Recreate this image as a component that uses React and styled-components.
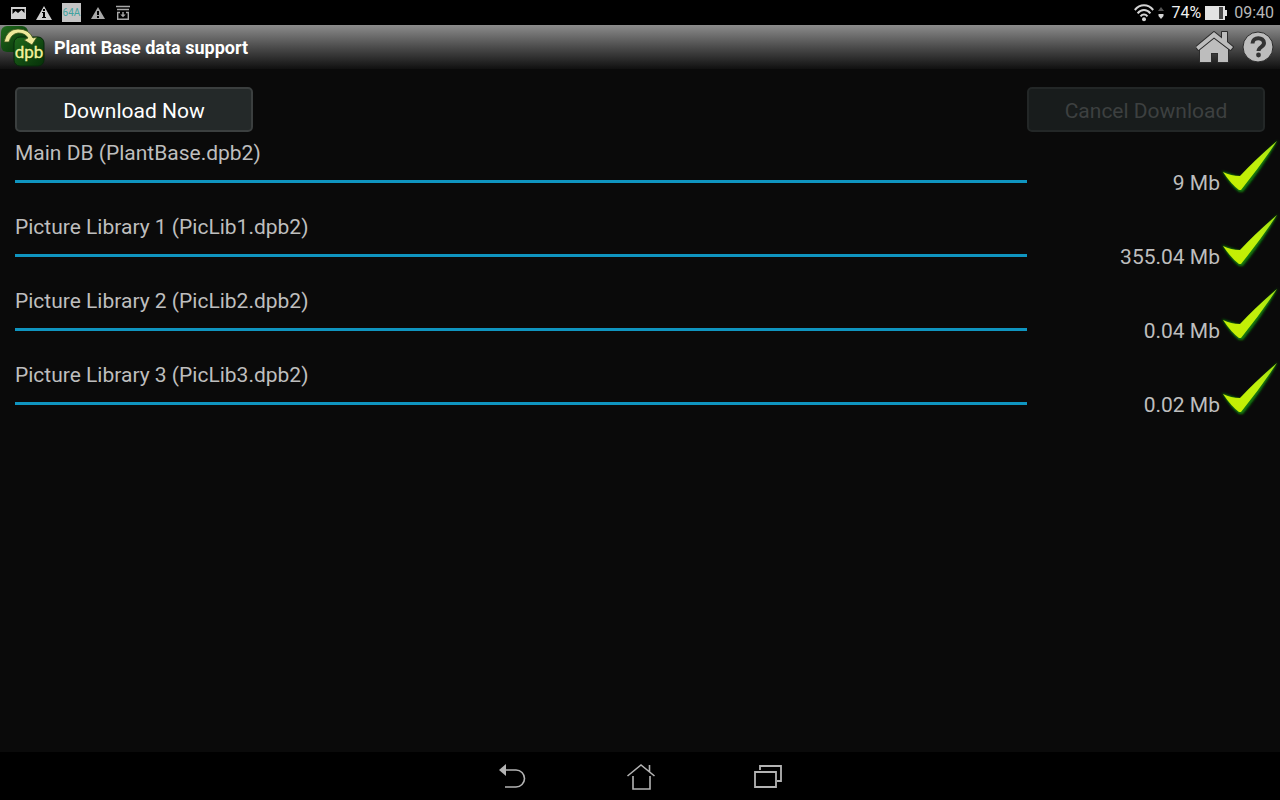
import React from 'react';
import styled, { createGlobalStyle } from 'styled-components';

const files = [
    { id: 'main', label: 'Main DB (PlantBase.dpb2)', size: '9 Mb' },
    { id: 'lib1', label: 'Picture Library 1 (PicLib1.dpb2)', size: '355.04 Mb' },
    { id: 'lib2', label: 'Picture Library 2 (PicLib2.dpb2)', size: '0.04 Mb' },
    { id: 'lib3', label: 'Picture Library 3 (PicLib3.dpb2)', size: '0.02 Mb' },
];

const PictureIcon = () => (
    <svg width="15" height="12" viewBox="0 0 15 12">
        <path fill="#d0d0d0" fillRule="evenodd" d="M0 0h15v12H0zM1.5 2v5l3-3L7 6l3.500-3 3 3V2z" />
    </svg>
);

const InfoTriangle = () => (
    <svg width="16" height="14" viewBox="0 0 16 14">
        <path fill="#d0d0d0" d="M8 0l8 14H0z" />
        <path fill="#000" d="M7 3h2v2H7zM6 6h3v5h1v1H6v-1h1V7H6z" />
    </svg>
);

const WarningTriangle = () => (
    <svg width="14" height="12" viewBox="0 0 14 12">
        <path fill="#a8a8a8" d="M7 0l7 12H0z" />
        <path fill="#000" d="M6 4h2v4H6zM6 9h2v2H6z" />
    </svg>
);

const InstallIcon = () => (
    <svg width="16" height="16" viewBox="0 0 16 16" fill="none" stroke="#a8a8a8" strokeWidth="1.4">
        <path d="M1 1.5h14M2 4.5h12M5 7.5H2.7v6.8h10.6V7.5H11" />
        <path fill="#a8a8a8" stroke="none" d="M7.3 7h1.4v2.5h2L8 12.3 5.3 9.5h2z" />
    </svg>
);

const WifiIcon = () => (
    <svg width="20" height="18" viewBox="0 0 20 18" fill="none" stroke="#d4d4d4" strokeWidth="2">
        <path d="M.8 6C6-.2 14-.2 19.2 6M3.6 9.3c3.6-4.4 9.2-4.4 12.8 0M6.5 12.4c2-2.4 5-2.4 7 0" />
        <circle cx="10" cy="15.3" r="2" fill="#d4d4d4" stroke="none" />
    </svg>
);

const TrafficIcon = () => (
    <svg width="6" height="14" viewBox="0 0 6 14">
        <path fill="#555" d="M3 1l3 4H0z" />
        <path fill="#d4d4d4" d="M.5 8h5v2L3 13 .5 10z" />
    </svg>
);

const BatteryIcon = () => (
    <svg width="22" height="16" viewBox="0 0 22 16">
        <path fill="#e2e2e2" d="M0 1h20v4h2v6h-2v4H0z" />
        <path fill="#4a4a4a" d="M14 2h4v12h-4z" />
    </svg>
);

const LogoIcon = () => (
    <svg width="46" height="44" viewBox="0 0 46 44">
        <defs>
            <linearGradient id="leaf" x1="0" y1="0" x2="1" y2="1">
                <stop offset="0" stopColor="#1f6a1c" />
                <stop offset="1" stopColor="#063008" />
            </linearGradient>
        </defs>
        <rect x="1" y="1" width="27" height="26" rx="6" fill="url(#leaf)" />
        <rect x="14" y="12" width="30" height="29" rx="6" fill="url(#leaf)" stroke="#07280a" />
        <path d="M4 17Q7 4 18 4q11 0 15 9l4-1-5 8-8-5 4-2q-3-5-10-5-7 1-9 9z" fill="#eee99a" stroke="#39521b" strokeWidth=".8" />
        <text x="29" y="33" textAnchor="middle" fontFamily="Roboto, sans-serif" fontSize="17" fill="#f3f29d" stroke="#f3f29d" strokeWidth=".3">dpb</text>
    </svg>
);

const HomeIcon = () => (
    <svg width="38" height="34" viewBox="0 0 38 34">
        <g stroke="#2c2c2c" strokeWidth="2" strokeLinejoin="round" paintOrder="stroke" fill="#bdbdbd">
            <path d="M18 8l14 11v13H22v-9h-7v9H4V19z" />
            <path d="M18 2L0 17l2.5 3L18 7.5 34.5 20l2.5-3-6-5V2h-5v6.5z" />
        </g>
    </svg>
);

const HelpIcon = () => (
    <svg width="32" height="32" viewBox="0 0 32 32">
        <circle cx="16" cy="16" r="15" fill="#bdbdbd" stroke="#2c2c2c" />
        <path d="M10.5 12.5c0-7 11.5-7 11.5-.5 0 4-5.5 4-5.5 8" fill="none" stroke="#333" strokeWidth="4" />
        <circle cx="16.5" cy="24" r="2.4" fill="#333" />
    </svg>
);

const CheckIcon = () => (
    <svg width="60" height="58" viewBox="0 0 60 58" role="img" aria-label="Done">
        <defs>
            <linearGradient id="tick" x1="0" y1="1" x2="1" y2="0">
                <stop offset="0" stopColor="#c6ee00" />
                <stop offset=".6" stopColor="#bff00c" />
                <stop offset="1" stopColor="#9add14" />
            </linearGradient>
            <filter id="glow" x="-20%" y="-20%" width="140%" height="140%">
                <feGaussianBlur stdDeviation="1" />
            </filter>
        </defs>
        <path d="M2 32l15 5h4L58 1Q44 27 23 53h-4Q10 46 2 32z" fill="#127a0c" filter="url(#glow)" />
        <path d="M3 33q8 4 17 4Q36 20 57 2 41 26 21 51h-2Q11 45 3 33z" fill="url(#tick)" />
    </svg>
);

const BackNavIcon = () => (
    <svg width="30" height="28" viewBox="0 0 30 28">
        <path d="M7 7h11a8.5 8.5 0 0 1 0 17H7" fill="none" stroke="#b4b4b4" strokeWidth="1.6" />
        <path d="M1 7l7-6v12z" fill="#b4b4b4" />
    </svg>
);

const HomeNavIcon = () => (
    <svg width="30" height="28" viewBox="0 0 30 28" fill="none" stroke="#b4b4b4" strokeWidth="1.6">
        <path d="M1.5 13L15 2l13.5 11M23.5 8.5V2M7 13v13h17V13" />
    </svg>
);

const RecentNavIcon = () => (
    <svg width="30" height="26" viewBox="0 0 30 26" fill="none" stroke="#b4b4b4" strokeWidth="1.8">
        <path d="M1 8h21v15H1zM6 6V2h21v15h-4" />
    </svg>
);

const App = () => {
    return (
        <>
            <GlobalStyle />
            <Screen>
                <StatusBar>
                    <StatusGroup $gap={10}>
                        <PictureIcon />
                        <InfoTriangle />
                        <AppBadge>64A</AppBadge>
                        <WarningTriangle />
                        <InstallIcon />
                    </StatusGroup>
                    <StatusGroup $gap={4}>
                        <WifiIcon />
                        <TrafficIcon />
                        <StatusText $bright>74%</StatusText>
                        <BatteryIcon />
                        <StatusText>09:40</StatusText>
                    </StatusGroup>
                </StatusBar>
                <TitleBar>
                    <LogoIcon />
                    <Title>Plant Base data support</Title>
                    <IconButton aria-label="Home"><HomeIcon /></IconButton>
                    <IconButton aria-label="Help"><HelpIcon /></IconButton>
                </TitleBar>
                <Content>
                    <Actions>
                        <ActionButton>Download Now</ActionButton>
                        <ActionButton disabled>Cancel Download</ActionButton>
                    </Actions>
                    <FileList>
                        {files.map((file) => (
                            <FileRow key={file.id}>
                                <FileInfo>
                                    <FileLabel htmlFor={file.id}>{file.label}</FileLabel>
                                    <Progress id={file.id} value={100} max={100} />
                                </FileInfo>
                                <FileStatus>
                                    <FileSize>{file.size}</FileSize>
                                    <CheckIcon />
                                </FileStatus>
                            </FileRow>
                        ))}
                    </FileList>
                </Content>
                <NavBar>
                    <NavButton aria-label="Back"><BackNavIcon /></NavButton>
                    <NavButton aria-label="Home screen"><HomeNavIcon /></NavButton>
                    <NavButton aria-label="Recent apps"><RecentNavIcon /></NavButton>
                </NavBar>
            </Screen>
        </>
    );
};

const GlobalStyle = createGlobalStyle`
    * {
        box-sizing: border-box;
    }

    body {
        margin: 0;
        background: #000;
        font-family: Roboto, sans-serif;
    }

    svg {
        display: block;
        flex-shrink: 0;
    }
`;

const Screen = styled.div`
    display: flex;
    flex-direction: column;
    min-height: 100vh;
    background: #0a0a0a;
`;

const StatusBar = styled.header`
    display: flex;
    justify-content: space-between;
    height: 25px;
    padding: 0 6px 0 11px;
    background: #000;
`;

const StatusGroup = styled.div`
    display: flex;
    align-items: center;
    gap: ${props => props.$gap}px;
`;

const AppBadge = styled.span`
    width: 19px;
    background: #c4c4c4;
    color: #3fa3a0;
    font-size: 10px;
    line-height: 19px;
    text-align: center;
`;

const StatusText = styled.span`
    color: ${props => props.$bright ? '#f0f0f0' : '#b8b8b8'};
    font-size: 16px;
    margin-left: 3px;
`;

const TitleBar = styled.div`
    display: flex;
    align-items: center;
    height: 44px;
    padding-right: 6px;
    background: linear-gradient(#8c8c8c, #4c4c4c 50%, #101010);
`;

const Title = styled.h1`
    flex: 1;
    margin: 0;
    padding-left: 8px;
    color: #fff;
    font-size: 18px;
    font-weight: 700;
`;

const IconButton = styled.button`
    margin-left: 8px;
    padding: 0;
    border: 0;
    background: none;
    cursor: pointer;
`;

const Content = styled.main`
    flex: 1;
    padding: 18px 0 0 15px;
`;

const Actions = styled.div`
    display: flex;
    justify-content: space-between;
    padding-right: 15px;
`;

const ActionButton = styled.button`
    width: 238px;
    height: 45px;
    padding: 2px 0 0;
    border: 2px solid #3b3f3f;
    border-radius: 5px;
    background: #242929;
    color: #fff;
    font-family: inherit;
    font-size: 21px;
    cursor: pointer;

    &:disabled {
        border-color: #232727;
        background: #181c1c;
        color: #3d4040;
        cursor: default;
    }
`;

const FileList = styled.ul`
    margin: 0;
    padding: 7px 0 0;
    list-style: none;
`;

const FileRow = styled.li`
    display: grid;
    grid-template-columns: 4fr 1fr;
    align-items: start;
    min-height: 74px;
`;

const FileInfo = styled.div`
    display: flex;
    flex-direction: column;
    gap: 13px;
`;

const FileLabel = styled.label`
    color: #bebebe;
    font-size: 21px;
    line-height: 28px;
`;

const Progress = styled.progress`
    appearance: none;
    display: block;
    width: 100%;
    height: 3px;
    border: 0;
    background: #222;

    &::-webkit-progress-bar {
        background: #222;
    }

    &::-webkit-progress-value {
        background: #0f95c0;
    }
`;

const FileStatus = styled.div`
    display: flex;
    align-items: flex-end;
    justify-content: flex-end;
`;

const FileSize = styled.span`
    color: #bebebe;
    font-size: 21px;
    line-height: 28px;
`;

const NavBar = styled.nav`
    display: flex;
    align-items: center;
    justify-content: center;
    height: 48px;
    padding: 2px 0 0 2px;
    background: #000;
`;

const NavButton = styled.button`
    display: flex;
    justify-content: center;
    width: 128px;
    padding: 0;
    border: 0;
    background: none;
    cursor: pointer;
`;

export default App;
